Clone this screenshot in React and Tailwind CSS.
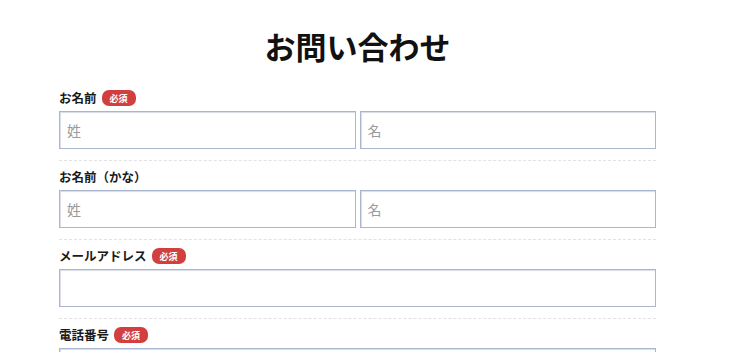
import React from "react";

const font = { fontFamily: '"Noto Sans CJK JP", "Noto Sans", sans-serif' };

function Required() {
  return (
    <span className="ml-[5px] inline-flex h-[16px] w-[34px] items-center justify-center rounded-[7px] bg-[#d1403f] text-[9px] font-bold leading-none text-white">
      必須
    </span>
  );
}

function TextInput({ placeholder }) {
  return (
    <input
      type="text"
      placeholder={placeholder}
      className="h-[38px] w-full min-w-0 border border-[#a8b6cf] bg-white pl-[7px] text-[14px] text-[#333] shadow-[inset_1px_1px_1px_rgba(120,140,170,0.3)] outline-none placeholder:text-[#9a9a9a]"
    />
  );
}

function Field({ label, required, children, last }) {
  return (
    <div
      className={
        "pt-[7px] " +
        (last ? "" : "border-b border-dashed border-[#e2e2e2] pb-[11px]")
      }
    >
      <div className="mb-[4px] flex h-[18px] items-center">
        <span className="text-[12.5px] font-bold text-[#1a1a1a]">{label}</span>
        {required && <Required />}
      </div>
      {children}
    </div>
  );
}

export default function App() {
  return (
    <div className="min-h-screen bg-white" style={font}>
      <div className="ml-[59px] w-[597px] pt-[28px]">
        <h1 className="mb-[18px] text-center text-[31px] font-bold leading-[36px] text-[#111]">
          お問い合わせ
        </h1>
        <Field label="お名前" required>
          <div className="flex gap-[4px]">
            <TextInput placeholder="姓" />
            <TextInput placeholder="名" />
          </div>
        </Field>
        <Field label="お名前（かな）">
          <div className="flex gap-[4px]">
            <TextInput placeholder="姓" />
            <TextInput placeholder="名" />
          </div>
        </Field>
        <Field label="メールアドレス" required>
          <TextInput />
        </Field>
        <Field label="電話番号" required last>
          <TextInput />
        </Field>
      </div>
    </div>
  );
}
